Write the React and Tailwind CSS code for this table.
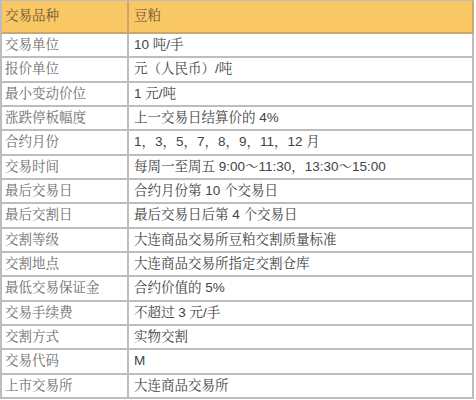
import React from "react";

const rows = [
  ["交易单位", "10 吨/手"],
  ["报价单位", "元（人民币）/吨"],
  ["最小变动价位", "1 元/吨"],
  ["涨跌停板幅度", "上一交易日结算价的 4%"],
  ["合约月份", "1，3，5，7，8，9，11，12 月"],
  ["交易时间", "每周一至周五 9:00～11:30，13:30～15:00"],
  ["最后交易日", "合约月份第 10 个交易日"],
  ["最后交割日", "最后交易日后第 4 个交易日"],
  ["交割等级", "大连商品交易所豆粕交割质量标准"],
  ["交割地点", "大连商品交易所指定交割仓库"],
  ["最低交易保证金", "合约价值的 5%"],
  ["交易手续费", "不超过 3 元/手"],
  ["交割方式", "实物交割"],
  ["交易代码", "M"],
  ["上市交易所", "大连商品交易所"],
];

const font = {
  fontFamily: '"Liberation Sans", "Noto Serif CJK SC", "Noto Sans CJK SC", sans-serif',
};

export default function App() {
  return (
    <div className="w-[476px] h-[400px] bg-white overflow-hidden" style={font}>
      <div className="w-[474px] border-l-2 border-t border-[#bdbdbd] grid grid-cols-[127px_1fr] text-[13.5px]">
        <div className="h-[33px] bg-[#f9c764] border-r-2 border-b-2 border-[#c9a870] flex items-center pl-[3px] text-[#6b5a3a]">
          交易品种
        </div>
        <div className="h-[33px] bg-[#f9c764] border-r-2 border-b-2 border-[#c9a870] flex items-center pl-[5px] text-[#6b5a3a]">
          豆粕
        </div>
        {rows.map(([k, v]) => (
          <React.Fragment key={k}>
            <div className="h-[24.33px] border-r-2 border-b-2 border-[#bdbdbd] flex items-center pl-[3px] text-[#6e6e6e]">
              {k}
            </div>
            <div className="h-[24.33px] border-r-2 border-b-2 border-[#bdbdbd] flex items-center pl-[5px] text-[#444]">
              {v}
            </div>
          </React.Fragment>
        ))}
      </div>
    </div>
  );
}
